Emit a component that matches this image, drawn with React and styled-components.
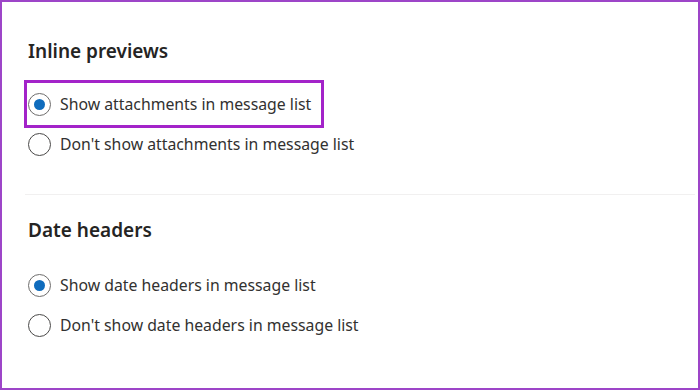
import React from 'react';
import styled, { createGlobalStyle } from 'styled-components';

const GlobalStyle = createGlobalStyle`
	html, body {
		margin: 0;
		padding: 0;
		background: #ffffff;
	}
	body {
		font-family: 'Noto Sans', 'Open Sans', sans-serif;
		color: #323130;
	}
`;

const sections = [
	{
		title: 'Inline previews',
		options: [
			{ label: 'Show attachments in message list', checked: true, marked: true },
			{ label: "Don't show attachments in message list" },
		],
	},
	{
		title: 'Date headers',
		options: [
			{ label: 'Show date headers in message list', checked: true },
			{ label: "Don't show date headers in message list" },
		],
	},
];

const App = () => {
	return (
		<>
			<GlobalStyle />
			<Frame>
				{sections.map((section, i) => (
					<Section key={section.title} $first={i === 0}>
						<Heading $first={i === 0}>{section.title}</Heading>
						<Options>
							{section.options.map((opt) => (
								<Option key={opt.label} $marked={opt.marked}>
									<Radio $checked={opt.checked} />
									<Label>{opt.label}</Label>
								</Option>
							))}
						</Options>
					</Section>
				))}
			</Frame>
		</>
	);
};

export default App;

const Frame = styled.div`
	box-sizing: border-box;
	width: 700px;
	height: 390px;
	border: 2px solid #9d45c8;
	padding: 0 3px 0 23px;
	background: #ffffff;
	overflow: hidden;
`;

const Section = styled.section`
	padding-left: 3px;
	border-bottom: ${(p) => (p.$first ? '1px solid #f1f0f0' : 'none')};
	padding-bottom: ${(p) => (p.$first ? '30px' : '0')};
`;

const Heading = styled.h2`
	margin: 0;
	padding-top: ${(p) => (p.$first ? '35px' : '21px')};
	font-size: 19px;
	line-height: 28px;
	font-weight: 600;
	color: #252423;
	margin-bottom: ${(p) => (p.$first ? '19px' : '21px')};
`;

const Options = styled.div`
	display: flex;
	flex-direction: column;
	align-items: flex-start;
`;

const Option = styled.label`
	display: inline-flex;
	align-items: center;
	gap: 9px;
	height: 40px;
	padding-right: 9px;
	outline: ${(p) => (p.$marked ? '3px solid #a323c9' : 'none')};
	outline-offset: 1px;
`;

const Radio = styled.span`
	box-sizing: border-box;
	width: 23px;
	height: 23px;
	border-radius: 50%;
	border: 1px solid ${(p) => (p.$checked ? '#6e6d6c' : '#4a4948')};
	display: flex;
	align-items: center;
	justify-content: center;
	flex-shrink: 0;
	&::after {
		content: '';
		width: 11px;
		height: 11px;
		border-radius: 50%;
		background: #0f6cbd;
		display: ${(p) => (p.$checked ? 'block' : 'none')};
	}
`;

const Label = styled.span`
	font-size: 15.8px;
	line-height: 22px;
	color: #323130;
	white-space: nowrap;
`;
